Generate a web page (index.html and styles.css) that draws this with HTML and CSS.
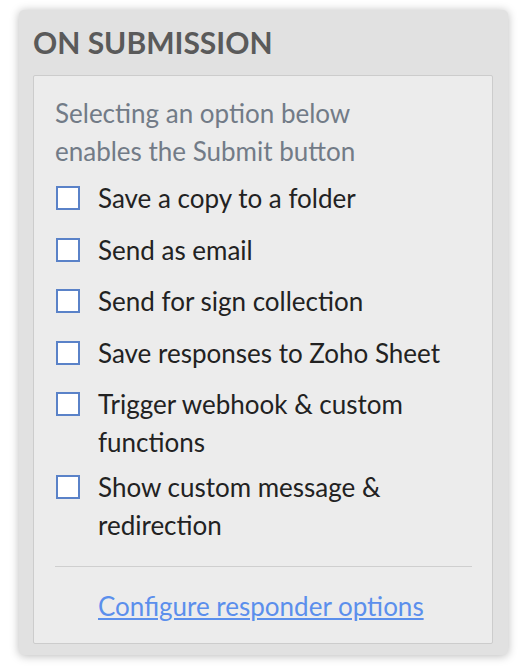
FILE: index.html
```html
<!DOCTYPE html>
<html>
<head>
<meta charset="utf-8">
<link rel="stylesheet" href="styles.css">
</head>
<body>
<div class="panel">
  <h2 class="panel-title">ON SUBMISSION</h2>
  <div class="box">
    <p class="hint">Selecting an option below enables the Submit button</p>
    <ul class="options">
      <li class="option"><span class="check"></span><span class="label">Save a copy to a folder</span></li>
      <li class="option"><span class="check"></span><span class="label">Send as email</span></li>
      <li class="option"><span class="check"></span><span class="label">Send for sign collection</span></li>
      <li class="option"><span class="check"></span><span class="label">Save responses to Zoho Sheet</span></li>
      <li class="option"><span class="check"></span><span class="label">Trigger webhook &amp; custom functions</span></li>
      <li class="option"><span class="check"></span><span class="label">Show custom message &amp; redirection</span></li>
    </ul>
    <div class="divider"></div>
    <a class="link" href="#">Configure responder options</a>
  </div>
</div>
</body>
</html>
```
FILE: styles.css
```css
html, body {
  margin: 0;
  padding: 0;
  background: #ffffff;
}
body {
  font-family: Lato, "Noto Sans", sans-serif;
  padding: 10px 16px 13px 19px;
}
.panel {
  width: 489px;
  height: 645px;
  box-sizing: border-box;
  background: #e1e1e1;
  border-radius: 5px;
  box-shadow: 0 1px 10px rgba(0, 0, 0, 0.28);
  padding: 14px 15px 11px 14px;
  display: flex;
  flex-direction: column;
}
.panel-title {
  margin: 0;
  font-size: 30px;
  font-weight: 700;
  color: #5a5a5a;
  line-height: 36px;
  height: 51px;
}
.box {
  flex: 1;
  background: #ececec;
  border: 1px solid #cccccc;
  border-radius: 2px;
  padding: 18px 20px 0 21px;
  display: flex;
  flex-direction: column;
}
.hint {
  margin: 0;
  font-size: 26px;
  line-height: 38px;
  color: #727b87;
  width: 340px;
}
.options {
  list-style: none;
  margin: 10px 0 0 0;
  padding: 0;
}
.option {
  display: flex;
  align-items: flex-start;
  font-size: 26px;
  line-height: 37.5px;
  min-height: 43.5px;
  color: #222222;
  margin-bottom: 8px;
}
.check {
  flex: none;
  width: 24px;
  height: 24px;
  box-sizing: border-box;
  border: 2px solid #5a82c8;
  background: #ffffff;
  margin: 6px 18px 0 1px;
}
.label {
  flex: 1;
}
.divider {
  height: 1px;
  background: #cfcfcf;
  margin: 14px 0 0 0;
}
.link {
  margin: 21px 0 0 43px;
  font-size: 26px;
  line-height: 37px;
  color: #5b8fec;
  text-decoration: underline;
  align-self: flex-start;
}
```
